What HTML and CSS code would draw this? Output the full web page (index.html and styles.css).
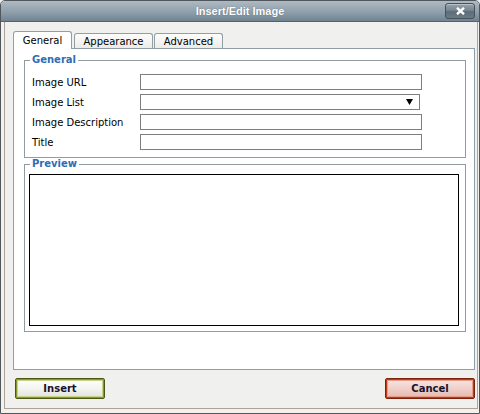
FILE: index.html
```html
<!DOCTYPE html>
<html>
<head>
<meta charset="utf-8">
<title>Insert/Edit Image</title>
<link rel="stylesheet" href="styles.css">
</head>
<body>
<div class="window">
  <div class="titlebar">
    <span class="title">Insert/Edit Image</span>
    <button class="close" aria-label="Close">
      <svg width="9" height="8" viewBox="0 0 9 8"><path d="M1 0.8 L8 7.2 M8 0.8 L1 7.2" stroke="#fff" stroke-width="2.4" fill="none"/></svg>
    </button>
  </div>
  <div class="body">
    <div class="tabs">
      <div class="tab active tab-general">General</div>
      <div class="tab tab-appearance">Appearance</div>
      <div class="tab tab-advanced">Advanced</div>
    </div>
    <div class="panel">
      <fieldset class="group general">
        <legend>General</legend>
        <div class="row"><label>Image URL</label><div class="input"></div></div>
        <div class="row"><label>Image List</label><div class="input select"><svg width="7" height="6" viewBox="0 0 7 6"><path d="M0 0 H7 L3.5 6 Z" fill="#000"/></svg></div></div>
        <div class="row"><label>Image Description</label><div class="input"></div></div>
        <div class="row"><label>Title</label><div class="input"></div></div>
      </fieldset>
      <fieldset class="group preview">
        <legend>Preview</legend>
        <div class="preview-box"></div>
      </fieldset>
    </div>
    <div class="actions">
      <button class="btn insert">Insert</button>
      <button class="btn cancel">Cancel</button>
    </div>
  </div>
</div>
</body>
</html>
```

FILE: styles.css
```css
html, body {
  margin: 0;
  padding: 0;
}
body {
  width: 480px;
  height: 414px;
  overflow: hidden;
  font-family: "DejaVu Sans", Verdana, sans-serif;
  font-size: 10px;
  color: #000;
  background: #efeeeb;
}
.window {
  box-sizing: border-box;
  width: 480px;
  height: 414px;
  border: 1px solid #50575c;
  border-radius: 5px 5px 0 0;
  overflow: hidden;
  background: #f2f1ee;
  display: flex;
  flex-direction: column;
}
.titlebar {
  box-sizing: border-box;
  height: 21px;
  flex: none;
  display: grid;
  grid-template-columns: 1fr auto 1fr;
  align-items: start;
  background: linear-gradient(#aebac3 0%, #909fab 55%, #718392 100%);
  border-bottom: 1px solid #56616a;
}
.title {
  grid-column: 2;
  font-family: "Liberation Sans", Arial, sans-serif;
  font-weight: bold;
  font-size: 11px;
  line-height: 20px;
  color: #fff;
  text-shadow: 0 0 1px rgba(40, 55, 65, 0.6);
}
.close {
  grid-column: 3;
  justify-self: end;
  box-sizing: border-box;
  width: 30px;
  height: 16px;
  margin: 2px 4px 0 0;
  padding: 0;
  border: 1px solid #46525b;
  border-radius: 3px;
  background: linear-gradient(#97a4ae 0%, #76858f 45%, #5d6c77 55%, #6c7a84 100%);
  box-shadow: inset 0 1px 0 rgba(255, 255, 255, 0.35);
  display: flex;
  align-items: center;
  justify-content: center;
}
.close svg {
  display: block;
}
.body {
  flex: 1;
  margin: 0 1px 4px 3px;
  border: 1px solid #ada39a;
  border-top: none;
  background: #f0f0ee;
  padding: 9px 2px 0 8px;
  display: flex;
  flex-direction: column;
}
.tabs {
  display: flex;
  align-items: flex-end;
  height: 18px;
  flex: none;
}
.tab {
  box-sizing: border-box;
  height: 16px;
  padding: 2px 0 0;
  text-align: center;
  line-height: 12px;
  border: 1px solid #919ea6;
  border-bottom: none;
  border-radius: 3px 3px 0 0;
  background: linear-gradient(#fdfdfc, #ebeae5);
  color: #000;
}
.tab-general {
  width: 59px;
}
.tab-appearance {
  width: 79px;
  margin-left: 2px;
}
.tab-advanced {
  width: 69px;
  margin-left: 1px;
}
.tab.active {
  height: 18px;
  padding-top: 3px;
  background: #fff;
  position: relative;
  z-index: 1;
}
.panel {
  box-sizing: border-box;
  width: 462px;
  height: 322px;
  margin-top: -1px;
  border: 1px solid #919ea6;
  background: #fff;
  padding: 5px 8px 0 10px;
  flex: none;
}
.group {
  margin: 0;
  min-width: 0;
  border: 1px solid #929ca0;
}
.group legend {
  padding: 0 2px;
  font-weight: bold;
  font-size: 10px;
  line-height: 12px;
  color: #2f6cb6;
}
.general {
  padding: 6px 6px 5px 7px;
}
.general legend {
  margin-left: -2px;
}
.row {
  display: grid;
  grid-template-columns: 108px auto;
  align-items: center;
  height: 20px;
}
.row label {
  line-height: 12px;
  padding-top: 2px;
}
.input {
  box-sizing: border-box;
  width: 282px;
  height: 16px;
  border: 1px solid #7e7e7e;
  background: #fff;
}
.input.select {
  width: 280px;
  display: flex;
  align-items: center;
  justify-content: flex-end;
  padding-right: 6px;
}
.input.select svg {
  display: block;
}
.preview {
  padding: 4px 6px 5px 4px;
}
.preview legend {
  margin-left: 1px;
}
.preview-box {
  box-sizing: border-box;
  width: 430px;
  height: 152px;
  border: 1px solid #000;
  background: #fff;
}
.actions {
  display: flex;
  justify-content: space-between;
  margin-top: 8px;
  padding-left: 2px;
}
.btn {
  box-sizing: border-box;
  width: 90px;
  height: 21px;
  padding: 0;
  font-family: "DejaVu Sans", Verdana, sans-serif;
  font-weight: bold;
  font-size: 10px;
  line-height: 17px;
  color: #14142e;
  border-radius: 2px;
}
.insert {
  border: 1px solid #4c5714;
  box-shadow: inset 0 0 0 1px #869a2a, inset 0 0 0 2px #c7d38a;
  background: linear-gradient(#ffffff 0%, #f4f4f0 50%, #e1e1da 100%);
}
.cancel {
  border: 1px solid #7e200a;
  box-shadow: inset 0 0 0 1px #c23a14, inset 0 0 0 2px #e59c86;
  background: linear-gradient(#f9e6e2 0%, #f0d0ca 50%, #e4b8ae 100%);
}
```
